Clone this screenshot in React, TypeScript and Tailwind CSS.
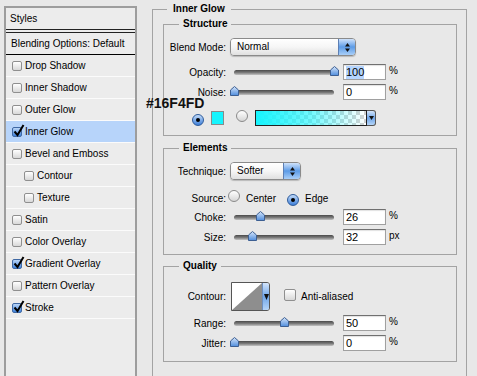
import React from "react";

type Item = { name: string; checked?: boolean; active?: boolean; sub?: boolean };

const items: Item[] = [
  { name: "Drop Shadow" },
  { name: "Inner Shadow" },
  { name: "Outer Glow" },
  { name: "Inner Glow", checked: true, active: true },
  { name: "Bevel and Emboss" },
  { name: "Contour", sub: true },
  { name: "Texture", sub: true },
  { name: "Satin" },
  { name: "Color Overlay" },
  { name: "Gradient Overlay", checked: true },
  { name: "Pattern Overlay" },
  { name: "Stroke", checked: true },
];

function Check({ checked, size = "w-[10px] h-[10px]" }: { checked?: boolean; size?: string }) {
  return (
    <span
      className={
        "relative inline-block shrink-0 rounded-[2px] border " +
        size +
        (checked
          ? " border-[#3f68a3] bg-linear-to-b from-[#b9d5f7] to-[#3f83dc]"
          : " border-[#8f8f8f] bg-linear-to-b from-white to-[#d8d8d8]")
      }
    >
      {checked && (
        <svg className="absolute -top-[4px] left-[0px]" width="12" height="13" viewBox="0 0 12 13">
          <path d="M1.5 7.5 L4.5 11 L10.5 1" fill="none" stroke="#000" strokeWidth="2" />
        </svg>
      )}
    </span>
  );
}

function Radio({ on }: { on?: boolean }) {
  return (
    <span
      className={
        "inline-flex h-[12px] w-[12px] shrink-0 items-center justify-center rounded-full border " +
        (on
          ? "border-[#2e5b9b] bg-linear-to-b from-[#c3dbf8] to-[#3d7fd8]"
          : "border-[#8a8a8a] bg-linear-to-b from-white to-[#d6d6d6]")
      }
    >
      {on && <span className="h-[4px] w-[4px] rounded-full bg-black" />}
    </span>
  );
}

function Arrows() {
  return (
    <svg width="7" height="11" viewBox="0 0 7 11">
      <path d="M3.5 1 L6 4.5 H1 Z" fill="#111" />
      <path d="M3.5 10 L6 6.5 H1 Z" fill="#111" />
    </svg>
  );
}

function PopUp({ value, className }: { value: string; className: string }) {
  return (
    <div
      className={
        "flex h-[18px] overflow-hidden rounded-[4px] border border-[#8a8a8a] shadow-[0_1px_1px_rgba(0,0,0,0.2)] " +
        className
      }
    >
      <div className="flex-1 bg-linear-to-b from-white via-[#f6f6f6] to-[#e0e0e0] pl-[6px] leading-[16px]">{value}</div>
      <div className="flex w-[17px] items-center justify-center border-l border-[#5d7fb4] bg-linear-to-b from-[#cfe2fa] via-[#5c9be6] to-[#a9cff8]">
        <Arrows />
      </div>
    </div>
  );
}

function Thumb() {
  return (
    <svg width="9" height="10" viewBox="0 0 9 10">
      <defs>
        <linearGradient id="thumb" x1="0" y1="0" x2="0" y2="1">
          <stop offset="0" stopColor="#d6e6fb" />
          <stop offset="1" stopColor="#4f8ddd" />
        </linearGradient>
      </defs>
      <path d="M4.5 0.5 L8.5 4 V9.5 H0.5 V4 Z" fill="url(#thumb)" stroke="#3d5f92" />
    </svg>
  );
}

function Slider({ at }: { at: number }) {
  return (
    <div className="relative ml-[2px] h-[14px] w-[110px] shrink-0">
      <div className="absolute left-[6px] top-[5px] h-[5px] w-[100px] rounded-full bg-linear-to-b from-[#4a4a4a] via-[#7a7a7a] to-[#c4c4c4]" />
      <div className="absolute top-[1px]" style={{ left: 2 + at * 100 }}>
        <Thumb />
      </div>
    </div>
  );
}

function Field({ value, selected }: { value: string; selected?: boolean }) {
  return (
    <div className="ml-[5px] flex h-[16px] w-[43px] shrink-0 items-center border border-[#a0a0a0] border-t-[#707070] bg-white pl-[2px] text-[11px] leading-[13px] shadow-[inset_0_1px_1px_rgba(0,0,0,0.12)]">
      <span className={selected ? "bg-[#b5d5ff]" : ""}>{value}</span>
    </div>
  );
}

function SliderRow(props: { label: string; at: number; value: string; unit: string; selected?: boolean; className: string }) {
  return (
    <div className={"flex h-[16px] items-center " + props.className}>
      <div className="w-[62px] shrink-0 text-right">{props.label}</div>
      <Slider at={props.at} />
      <Field value={props.value} selected={props.selected} />
      <span className="ml-[3px] -mt-[3px]">{props.unit}</span>
    </div>
  );
}

function Group({ title, children, className }: { title: string; children: React.ReactNode; className: string }) {
  return (
    <fieldset className={"border border-[#a3a3a3] " + className}>
      <legend className="ml-[15px] px-[4px] font-bold leading-[12px]">{title}</legend>
      {children}
    </fieldset>
  );
}

export default function App() {
  return (
    <div className="relative flex h-[376px] w-[477px] items-start overflow-hidden bg-[#e8e8e8] pl-[4px] font-['Liberation_Sans',Arial,sans-serif] text-[10px] text-black">
      {/* styles list */}
      <div className="mt-[6px] h-[380px] w-[133px] shrink-0 border-2 border-[#9d9d9d] bg-[#ececec]">
        <div className="h-[21px] pl-[4px] leading-[21px]">Styles</div>
        <div className="h-[4px] border-y border-[#222]" />
        <div className="h-[22px] border-b border-black pl-[5px] leading-[21px]">Blending Options: Default</div>
        {items.map((it) => (
          <div
            key={it.name}
            className={
              "flex h-[22px] items-center border-b border-[#fbfbfb] " +
              (it.sub ? "pl-[18px] " : "pl-[6px] ") +
              (it.active ? "bg-[#b7d4fa]" : "")
            }
          >
            <Check checked={it.checked} />
            <span className="ml-[3px]">{it.name}</span>
          </div>
        ))}
      </div>

      {/* settings */}
      <fieldset className="ml-[15px] mt-[3px] w-[315px] shrink-0 border border-[#a3a3a3]">
        <legend className="ml-[14px] px-[6px] font-bold leading-[12px]">Inner Glow</legend>
        <div className="pb-[40px] pl-[10px] pr-[9px] pt-[3px]">
          <Group title="Structure" className="pb-[9px]">
            <div className="mt-[8px] flex items-center">
              <div className="w-[62px] shrink-0 text-right">Blend Mode:</div>
              <PopUp value="Normal" className="ml-[4px] w-[126px]" />
            </div>
            <SliderRow label="Opacity:" at={1} value="100" unit="%" selected className="mt-[8px]" />
            <SliderRow label="Noise:" at={0} value="0" unit="%" className="mt-[4px]" />
            <div className="mt-[10px] flex h-[16px] items-center">
              <div className="ml-[28px]">
                <Radio on />
              </div>
              <div className="ml-[7px] h-[14px] w-[13px] border border-[#8a8a8a] bg-[#16f4fd]" />
              <div className="ml-[12px]">
                <Radio />
              </div>
              <div className="ml-[7px] flex h-[16px] w-[121px]">
                <div className="h-full flex-1 border border-[#222] bg-[image:repeating-conic-gradient(#d2d2d2_0%_25%,#ffffff_0%_50%)] bg-[length:8px_8px]">
                  <div className="h-full w-full bg-linear-to-r from-[#16f4fd] via-[#16f4fd]/60 to-[#16f4fd]/0" />
                </div>
                <div className="flex w-[9px] items-center justify-center rounded-r-[3px] border border-l-0 border-[#555] bg-linear-to-b from-[#d4e5fa] via-[#6fa5e8] to-[#b5d5f8]">
                  <svg width="5" height="4" viewBox="0 0 5 4">
                    <path d="M0 0 H5 L2.5 4 Z" fill="#111" />
                  </svg>
                </div>
              </div>
            </div>
          </Group>

          <Group title="Elements" className="mt-[6px] pb-[9px]">
            <div className="mt-[8px] flex items-center">
              <div className="w-[62px] shrink-0 text-right">Technique:</div>
              <PopUp value="Softer" className="ml-[4px] w-[71px]" />
            </div>
            <div className="mt-[11px] flex h-[14px] items-center">
              <div className="w-[62px] shrink-0 text-right">Source:</div>
              <div className="ml-[2px]">
                <Radio />
              </div>
              <span className="ml-[6px]">Center</span>
              <div className="ml-[11px]">
                <Radio on />
              </div>
              <span className="ml-[6px]">Edge</span>
            </div>
            <SliderRow label="Choke:" at={0.26} value="26" unit="%" className="mt-[4px]" />
            <SliderRow label="Size:" at={0.18} value="32" unit="px" className="mt-[4px]" />
          </Group>

          <Group title="Quality" className="mt-[5px] pb-[10px]">
            <div className="mt-[10px] flex items-center">
              <div className="w-[62px] shrink-0 text-right">Contour:</div>
              <div className="ml-[5px] flex h-[29px] w-[39px] overflow-hidden rounded-r-[3px] border border-[#555]">
                <svg width="30" height="27" viewBox="0 0 30 27" className="bg-white">
                  <path d="M0 27 L30 0 V27 Z" fill="#8e8e8e" />
                </svg>
                <div className="flex flex-1 items-center justify-center border-l border-[#6d8fc0] bg-linear-to-b from-[#d4e5fa] via-[#6fa5e8] to-[#b5d5f8]">
                  <svg width="5" height="6" viewBox="0 0 5 6">
                    <path d="M0 0 H5 L2.5 6 Z" fill="#111" />
                  </svg>
                </div>
              </div>
              <div className="ml-[14px]">
                <Check size="w-[12px] h-[12px]" />
              </div>
              <span className="ml-[5px]">Anti-aliased</span>
            </div>
            <SliderRow label="Range:" at={0.5} value="50" unit="%" className="mt-[4px]" />
            <SliderRow label="Jitter:" at={0} value="0" unit="%" className="mt-[4px]" />
          </Group>
        </div>
      </fieldset>

      <div className="absolute left-[146px] top-[96px] text-[14px] font-bold leading-[14px] text-[#111]">#16F4FD</div>
    </div>
  );
}
